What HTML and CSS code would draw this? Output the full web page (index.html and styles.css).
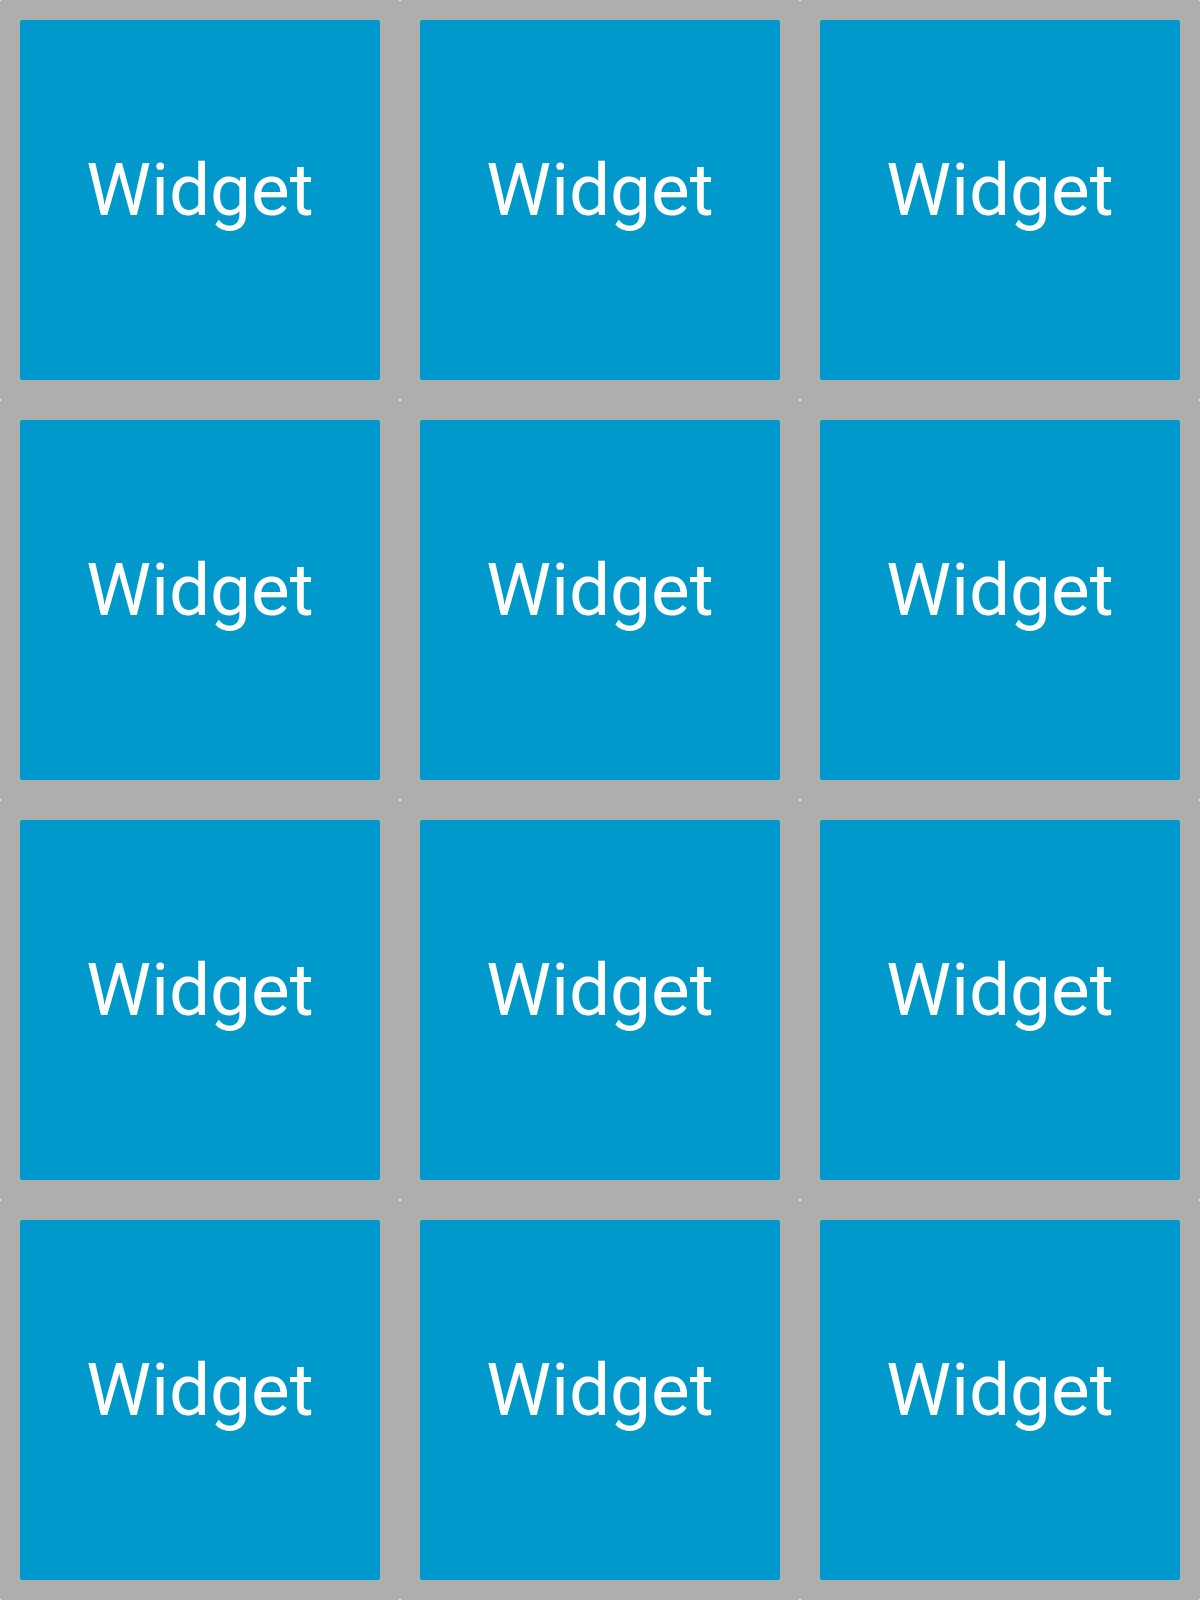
FILE: index.html
```html
<!DOCTYPE html>
<html>
<head>
<meta charset="utf-8">
<link rel="stylesheet" href="styles.css">
</head>
<body>
<div class="grid">
  <div class="cell"><div class="tile">Widget</div></div>
  <div class="cell"><div class="tile">Widget</div></div>
  <div class="cell"><div class="tile">Widget</div></div>
  <div class="cell"><div class="tile">Widget</div></div>
  <div class="cell"><div class="tile">Widget</div></div>
  <div class="cell"><div class="tile">Widget</div></div>
  <div class="cell"><div class="tile">Widget</div></div>
  <div class="cell"><div class="tile">Widget</div></div>
  <div class="cell"><div class="tile">Widget</div></div>
  <div class="cell"><div class="tile">Widget</div></div>
  <div class="cell"><div class="tile">Widget</div></div>
  <div class="cell"><div class="tile">Widget</div></div>
</div>
</body>
</html>
```
FILE: styles.css
```css
html, body {
  margin: 0;
  padding: 0;
  background: #aeaeae;
}
.grid {
  width: 1200px;
  height: 1600px;
  display: grid;
  grid-template-columns: repeat(3, 400px);
  grid-template-rows: repeat(4, 400px);
  background-color: #aeaeae;
  background-image: radial-gradient(circle at center, #e6e6e6 0, #e6e6e6 1px, transparent 1.6px);
  background-size: 400px 400px;
  background-position: -200px -200px;
}
.cell {
  padding: 20px;
}
.tile {
  width: 360px;
  height: 360px;
  background: #0099cc;
  border-radius: 2px;
  display: flex;
  align-items: center;
  justify-content: center;
  color: #ffffff;
  font-family: Roboto, sans-serif;
  font-size: 73px;
  line-height: 1;
  padding-bottom: 20px;
  box-sizing: border-box;
}
```
